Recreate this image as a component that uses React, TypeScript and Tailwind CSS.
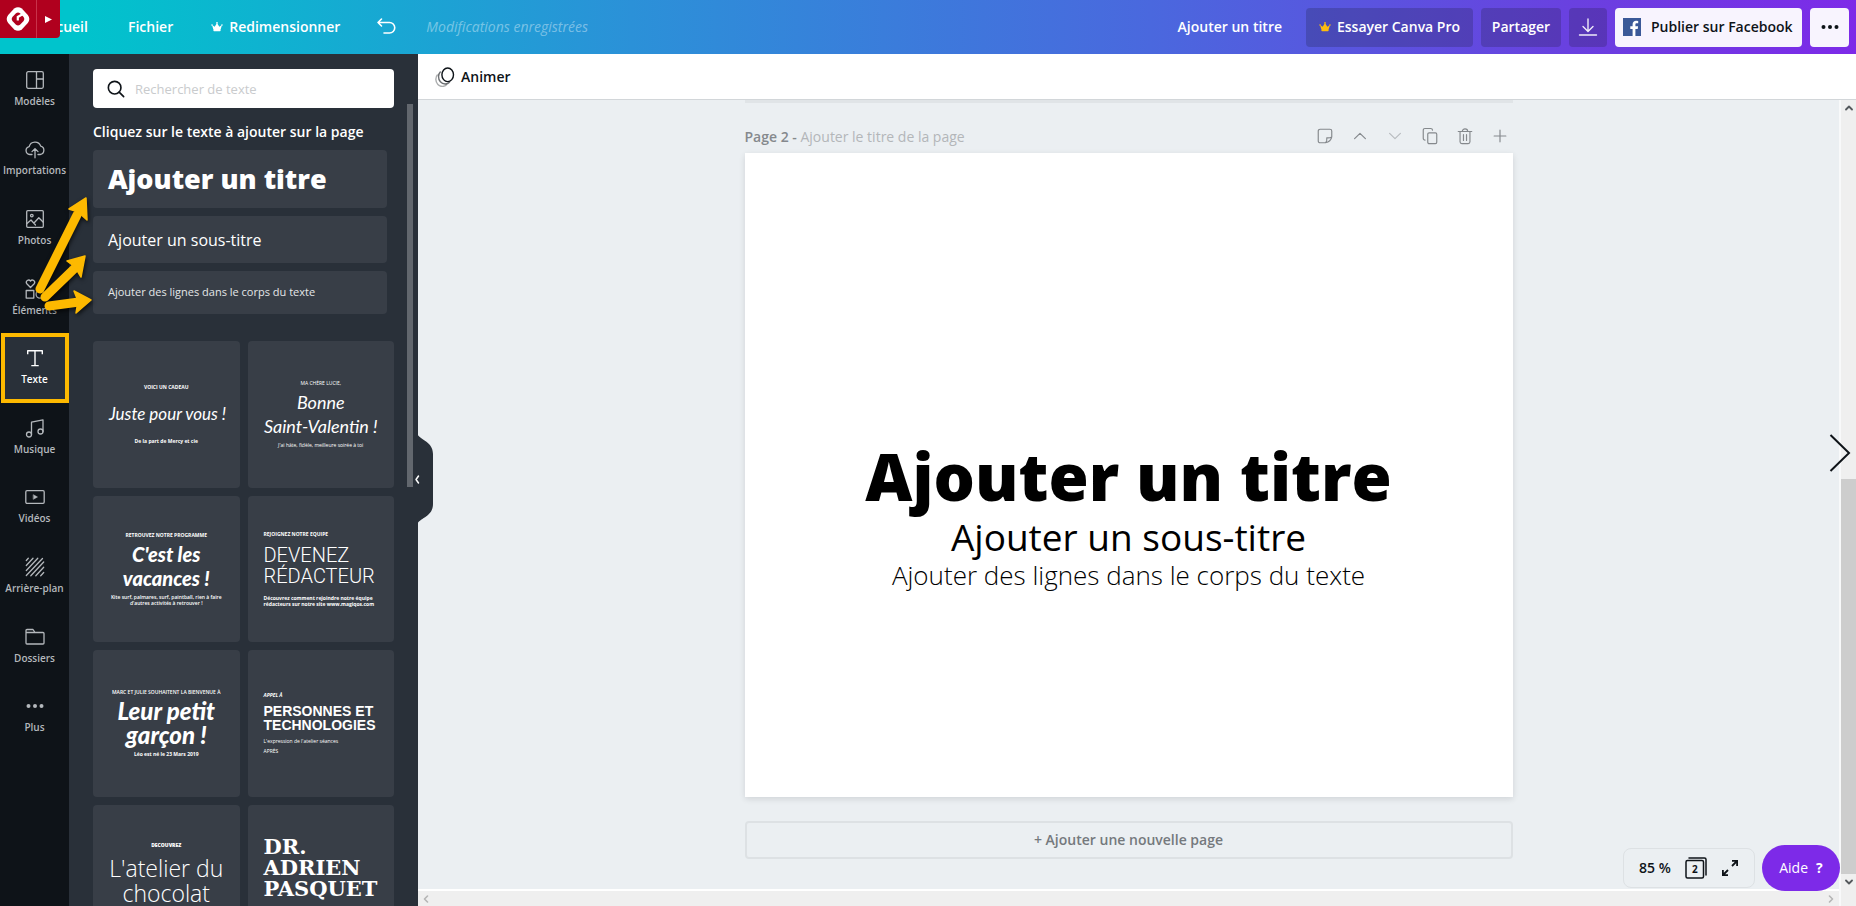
import React from "react";

type SvgProps = { className?: string };

const line = {
  fill: "none",
  stroke: "currentColor",
  strokeWidth: 1.3,
  strokeLinecap: "round" as const,
  strokeLinejoin: "round" as const,
};

/* ---------- Icons ---------- */

function Crown({ className }: SvgProps) {
  return (
    <svg viewBox="0 0 14 14" className={className} fill="currentColor" aria-hidden="true">
      <path d="M2.6 9.4 1.2 4.6 4.3 6.6 7 2.2l2.7 4.4 3.1-2-1.4 4.8z" />
      <rect x="2.8" y="9" width="8.4" height="3" rx=".8" />
      <circle cx="1.2" cy="4.6" r=".9" />
      <circle cx="12.8" cy="4.6" r=".9" />
      <circle cx="7" cy="2.1" r="1" />
    </svg>
  );
}

function BrandBadge() {
  return (
    <svg viewBox="0 0 26 26" className="size-[26px]" aria-hidden="true">
      <path
        d="M9.200 2.600Q13 0 16.800 2.600L22.800 9Q25.800 13 22.800 17L16.800 23.400Q13 26 9.200 23.400L3.200 17Q.200 13 3.200 9Z"
        fill="#fff"
      />
      <path
        d="M11 7.200Q13 5.600 15 7.200L18.600 11Q20.100 13 18.600 15L15 18.800Q13 20.400 11 18.800L7.400 15Q5.900 13 7.400 11Z"
        fill="#b0001e"
      />
      <path d="M17.500 8.200 12.800 11v3.600" fill="none" stroke="#fff" strokeWidth="2.200" />
    </svg>
  );
}

function TemplateIcon() {
  return (
    <svg viewBox="0 0 20 20" className="size-5" {...line} aria-hidden="true">
      <rect x="1.700" y="1.700" width="16.600" height="16.600" rx="1.500" />
      <path d="M11.500 1.700v16.600M11.500 9h6.800" />
    </svg>
  );
}
function UploadIcon() {
  return (
    <svg viewBox="0 0 20 20" className="size-5" {...line} aria-hidden="true">
      <path d="M7 15.500H4.800a4 4 0 0 1-.600-7.900 6 6 0 0 1 11.500-.500 4.300 4.300 0 0 1-.500 8.400H13" />
      <path d="M10 18.800V10M7 12.600l3-3 3 3" />
    </svg>
  );
}
function PhotoIcon() {
  return (
    <svg viewBox="0 0 20 20" className="size-5" {...line} aria-hidden="true">
      <rect x="1.700" y="1.700" width="16.600" height="16.600" rx="1" />
      <circle cx="6.800" cy="6.600" r="1.300" />
      <path d="m2 14.500 4-3.500 4.500 5M9 14l4.800-5.200 4.500 4.500" />
    </svg>
  );
}
function ElementsIcon() {
  return (
    <svg viewBox="0 0 20 20" className="size-5" {...line} aria-hidden="true">
      <path d="M5.500 8.500 1.800 4.700a2.200 2.200 0 0 1 3.700-2.600 2.200 2.200 0 0 1 3.700 2.600z" />
      <rect x="1.200" y="11.500" width="7.600" height="7.600" />
      <circle cx="15" cy="15.300" r="3.900" />
    </svg>
  );
}
function TextIcon() {
  return (
    <svg viewBox="0 0 20 20" className="size-5" {...line} strokeLinecap="square" strokeWidth="1.400" aria-hidden="true">
      <path d="M2.700 5.500V2.700h14.600v2.800M10 2.700v14.600M7 17.600h6" />
    </svg>
  );
}
function MusicIcon() {
  return (
    <svg viewBox="0 0 20 20" className="size-5" {...line} aria-hidden="true">
      <circle cx="4" cy="16.500" r="2.500" />
      <circle cx="15.500" cy="13.500" r="2.500" />
      <path d="M6.500 16.500V4.200L18 1.800v11.700" />
    </svg>
  );
}
function VideoIcon() {
  return (
    <svg viewBox="0 0 20 20" className="size-5" {...line} aria-hidden="true">
      <rect x=".800" y="3.700" width="18.400" height="12.600" rx="1.200" />
      <path d="m8.500 7.800 4 2.200-4 2.200z" fill="currentColor" strokeWidth=".500" />
    </svg>
  );
}
function BackgroundIcon() {
  return (
    <svg viewBox="0 0 20 20" className="size-5" {...line} aria-hidden="true">
      <path d="M1.300 3.500 3.300 1.300M1.300 8.500l6.700-7.200M1.300 13.500 12.800 1.300M1.300 18.500 17.500 1.500M5.800 18.700 18.700 5M10.800 18.700 18.700 10.300M15.700 18.700l3-3.200" />
    </svg>
  );
}
function FolderIcon() {
  return (
    <svg viewBox="0 0 20 20" className="size-5" {...line} aria-hidden="true">
      <path d="M1 15.500V3.500a1 1 0 0 1 1-1h6l2 3h8a1 1 0 0 1 1 1v9.500a1 1 0 0 1-1 1H2a1 1 0 0 1-1-1zM1 5.500h9" />
    </svg>
  );
}
function DotsIcon({ className = "size-5" }: SvgProps) {
  return (
    <svg viewBox="0 0 20 20" className={className} fill="currentColor" aria-hidden="true">
      <circle cx="3.500" cy="10" r="2" />
      <circle cx="10" cy="10" r="2" />
      <circle cx="16.500" cy="10" r="2" />
    </svg>
  );
}

/* ---------- Header ---------- */

const darkButton =
  "flex h-[39px] items-center justify-center rounded bg-[#0e1318]/20 text-white";

function Header() {
  return (
    <header className="flex h-[54px] shrink-0 items-center justify-between bg-[linear-gradient(90deg,#00c4cc_0%,#00c4cc_4%,#2b91d8_34%,#4a68de_62%,#6a40e0_85%,#7d2ae8_100%)] pr-[7px] pl-10 text-sm font-[570] text-white">
      <nav className="flex items-center" aria-label="Menu principal">
        <a href="#accueil" className="w-[88px]">Accueil</a>
        <a href="#fichier">Fichier</a>
        <a href="#redimensionner" className="ml-[38px] flex items-center gap-1.5">
          <Crown className="size-3" />
          Redimensionner
        </a>
        <button type="button" aria-label="Annuler" className="ml-9">
          <svg viewBox="0 0 20 20" className="size-5" {...line} strokeWidth="1.600" aria-hidden="true">
            <path d="M5.500 2 2 5.500 5.500 9M2 5.500h11.500a5 5 0 0 1 0 10.500H8" />
          </svg>
        </button>
        <span className="ml-[30px] font-normal text-white/40 italic">Modifications enregistrées</span>
      </nav>
      <div className="flex items-center gap-2">
        <a href="#titre" className="mr-4">Ajouter un titre</a>
        <button type="button" className={`${darkButton} w-[167px] gap-1.5`}>
          <Crown className="size-3 text-[#fdbc0d]" />
          Essayer Canva Pro
        </button>
        <button type="button" className={`${darkButton} w-20`}>Partager</button>
        <button type="button" aria-label="Télécharger" className={`${darkButton} w-[38px]`}>
          <svg viewBox="0 0 20 20" className="size-5 opacity-90" {...line} strokeWidth="1.400" aria-hidden="true">
            <path d="M10 2v12M5 9.500l5 5 5-5M1.500 18h17" />
          </svg>
        </button>
        <button
          type="button"
          className="flex h-[39px] w-[187px] items-center gap-2.5 rounded bg-[#f8f4fe] pl-2 text-[#0e1318]"
        >
          <svg viewBox="0 0 18 18" className="size-[18px]" aria-hidden="true">
            <rect width="18" height="18" fill="#3b5998" />
            <path
              d="M12.400 18v-7h2.300l.400-2.700h-2.700V6.600c0-.800.300-1.300 1.400-1.300h1.400V2.900a18 18 0 0 0-2.100-.100c-2 0-3.500 1.200-3.500 3.500v2H7.300V11h2.300v7z"
              fill="#fff"
            />
          </svg>
          Publier sur Facebook
        </button>
        <button
          type="button"
          aria-label="Plus d'options"
          className="flex h-[39px] w-[39px] items-center justify-center rounded bg-[#f8f4fe] text-[#0e1318]"
        >
          <DotsIcon className="size-5" />
        </button>
      </div>
    </header>
  );
}

/* ---------- Left navigation ---------- */

const navItems: { label: string; icon: React.ReactNode; active?: boolean }[] = [
  { label: "Modèles", icon: <TemplateIcon /> },
  { label: "Importations", icon: <UploadIcon /> },
  { label: "Photos", icon: <PhotoIcon /> },
  { label: "Éléments", icon: <ElementsIcon /> },
  { label: "Texte", icon: <TextIcon />, active: true },
  { label: "Musique", icon: <MusicIcon /> },
  { label: "Vidéos", icon: <VideoIcon /> },
  { label: "Arrière-plan", icon: <BackgroundIcon /> },
  { label: "Dossiers", icon: <FolderIcon /> },
  { label: "Plus", icon: <DotsIcon /> },
];

function SideNav() {
  return (
    <nav className="w-[69px] shrink-0 bg-[#0e1318] pt-px" aria-label="Outils">
      <ul className="grid h-[696px] grid-rows-10">
        {navItems.map((item) => (
          <li key={item.label} className={item.active ? "min-h-0 pl-px" : "min-h-0"}>
            <button
              type="button"
              className={
                item.active
                  ? "flex h-full w-full flex-col items-center justify-center gap-1 bg-[#293039] pr-px pb-0.5 text-white outline-4 -outline-offset-4 outline-[#fdb900]"
                  : "flex h-full w-full flex-col items-center justify-center gap-1 pb-0.5 text-[#b4b8bc]"
              }
            >
              {item.icon}
              <span className="text-[10px] leading-3.5 font-semibold whitespace-nowrap">{item.label}</span>
            </button>
          </li>
        ))}
      </ul>
    </nav>
  );
}

/* ---------- Text panel ---------- */

const card =
  "flex aspect-square flex-col justify-center overflow-hidden rounded bg-[#383e47] px-4 text-white";
const tiny = "text-[5px] leading-[6px] whitespace-nowrap";

function TextPanel() {
  return (
    <section className="relative w-[349px] shrink-0 bg-[#293039] pt-[15px] pr-6 pl-6 text-white" aria-label="Texte">
      <div className="flex h-[39px] items-center rounded bg-white pl-3.5 text-[#0e1318]">
        <svg viewBox="0 0 20 20" className="size-[18px]" {...line} strokeWidth="1.800" aria-hidden="true">
          <circle cx="8.500" cy="8.500" r="7" />
          <path d="m13.500 13.500 5 5" />
        </svg>
        <input
          type="search"
          aria-label="Rechercher de texte"
          placeholder="Rechercher de texte"
          className="ml-2.5 h-full min-w-0 flex-1 bg-transparent text-[13px] outline-none placeholder:text-[#c9cbcd]"
        />
      </div>
      <h2 className="pt-3.5 pb-2 text-sm leading-5 font-semibold whitespace-nowrap">
        Cliquez sur le texte à ajouter sur la page
      </h2>
      <div className="mr-[7px] flex flex-col gap-2 text-left">
        <button type="button" className="h-[58px] rounded bg-[#383e47] px-[15px] text-left text-[27px] font-extrabold">
          Ajouter un titre
        </button>
        <button type="button" className="h-[47px] rounded bg-[#383e47] px-[15px] text-left text-base">
          Ajouter un sous-titre
        </button>
        <button type="button" className="h-[43px] rounded bg-[#383e47] px-[15px] text-left text-[11px] text-[#e4e6e8]">
          Ajouter des lignes dans le corps du texte
        </button>
      </div>
      <div className="mt-[27px] grid grid-cols-2 gap-2">
        <button type="button" className={`${card} text-center`}>
          <span className={`${tiny} font-bold`}>VOICI UN CADEAU</span>
          <span className="my-2 font-['Lato'] text-[17px] leading-8 whitespace-nowrap italic">Juste pour vous !</span>
          <span className={`${tiny} font-bold`}>De la part de Mercy et cie</span>
        </button>
        <button type="button" className={`${card} text-center`}>
          <span className={tiny}>MA CHÈRE LUCIE,</span>
          <span className="my-1 font-['Lato'] text-lg leading-6 whitespace-nowrap italic">
            Bonne
            <br />
            Saint-Valentin !
          </span>
          <span className={tiny}>J'ai hâte, fidèle, meilleure soirée à toi</span>
        </button>
        <button type="button" className={`${card} text-center`}>
          <span className={`${tiny} font-bold`}>RETROUVEZ NOTRE PROGRAMME</span>
          <span className="my-1 font-['Lato'] text-xl leading-6 font-black whitespace-nowrap italic">
            C'est les
            <br />
            vacances !
          </span>
          <span className={`${tiny} self-center font-semibold`}>
            Kite surf, palmares, surf, paintball, rien à faire
            <br />
            d'autres activités à retrouver !
          </span>
        </button>
        <button type="button" className={`${card} text-left`}>
          <span className={`${tiny} font-bold`}>REJOIGNEZ NOTRE EQUIPE</span>
          <span className="my-2 font-['Roboto'] text-xl leading-[21px] font-light whitespace-nowrap">
            DEVENEZ
            <br />
            RÉDACTEUR
          </span>
          <span className={`${tiny} font-bold`}>
            Découvrez comment rejoindre notre équipe
            <br />
            rédacteurs sur notre site www.magiqos.com
          </span>
        </button>
        <button type="button" className={`${card} text-center`}>
          <span className={`${tiny} self-center font-semibold`}>MARC ET JULIE SOUHAITENT LA BIENVENUE À</span>
          <span className="my-1 self-center font-['Lato'] text-2xl leading-6 font-black whitespace-nowrap italic">
            Leur petit
            <br />
            garçon !
          </span>
          <span className={`${tiny} font-bold`}>Léo est né le 23 Mars 2019</span>
        </button>
        <button type="button" className={`${card} text-left`}>
          <span className={`${tiny} font-bold italic`}>APPEL À</span>
          <span className="my-1.5 font-['Liberation_Sans'] text-sm leading-3.5 font-bold whitespace-nowrap">
            PERSONNES ET
            <br />
            TECHNOLOGIES
          </span>
          <span className={tiny}>L'expression de l'atelier séances</span>
          <span className={`${tiny} mt-1`}>APRÈS</span>
        </button>
        <button type="button" className={`${card} text-center`}>
          <span className={`${tiny} font-extrabold`}>DECOUVREZ</span>
          <span className="my-2 self-center font-['Open_Sans'] text-[23px] leading-[25px] font-light whitespace-nowrap">
            L'atelier du
            <br />
            chocolat
          </span>
        </button>
        <button type="button" className={`${card} text-left`}>
          <span className="font-['DejaVu_Serif'] text-[21px] leading-[21px] font-bold whitespace-nowrap">
            DR.
            <br />
            ADRIEN
            <br />
            PASQUET
          </span>
          <span className="mt-2 text-[8px] leading-3">Médecin de la vue</span>
        </button>
      </div>

      {/* Panel scrollbar */}
      <div className="absolute top-[50px] right-[5px] h-[383px] w-1.5 bg-[#62676e]" />

      {/* Collapse handle */}
      <button type="button" aria-label="Masquer le panneau" className="absolute top-[378px] -right-[15px] z-10 h-24 w-5 text-white">
        <svg viewBox="0 0 20 96" className="h-24 w-5" aria-hidden="true">
          <path d="M4 0C4 8 20 8 20 22v50c0 14-16 14-16 22z" fill="#293039" />
          <path d="M5.500 44 3 47.500 5.500 51" {...line} strokeWidth="1.500" />
        </svg>
      </button>
    </section>
  );
}

/* ---------- Canvas ---------- */

const pageTools: { label: string; drawing: React.ReactNode; faded?: boolean }[] = [
  {
    label: "Ajouter une note",
    drawing: <path d="M10.500 17.500H4.500a2 2 0 0 1-2-2v-11a2 2 0 0 1 2-2h11a2 2 0 0 1 2 2v6.500q-1 5.500-7 6.500M10.500 17.500q2-2 1.500-5.500 3 .500 5.500-1" />,
  },
  { label: "Monter la page", drawing: <path d="m4 13 6-6 6 6" /> },
  { label: "Descendre la page", drawing: <path d="m4 7 6 6 6-6" />, faded: true },
  {
    label: "Dupliquer la page",
    drawing: (
      <>
        <rect x="7.500" y="6.500" width="10" height="12" rx="1.500" />
        <path d="M4.500 14.500a2 2 0 0 1-2-2V3.500a1.800 1.800 0 0 1 1.800-1.800h6.500a2 2 0 0 1 2 1.800" />
      </>
    ),
  },
  {
    label: "Supprimer la page",
    drawing: <path d="M2.500 5h15M4.500 5v11.500a2 2 0 0 0 2 2h7a2 2 0 0 0 2-2V5M7 5a3 3 0 0 1 6 0M8.300 8.500v6.500M11.700 8.500v6.500" />,
  },
  { label: "Ajouter une page", drawing: <path d="M10 3.500v13M3.500 10h13" /> },
];

function Canvas() {
  return (
    <main className="relative flex min-w-0 flex-1 flex-col bg-[#ebeff2]">
      <div className="flex h-[46px] shrink-0 items-center border-b border-[#d2d6d9] bg-white pl-[17px]">
        <button type="button" className="flex items-center gap-1.5 text-sm font-[570] text-[#0e1318]">
          <svg viewBox="0 0 20 20" className="size-5" fill="none" stroke="currentColor" strokeWidth="1.400" aria-hidden="true">
            <ellipse cx="12.700" cy="7.800" rx="5.800" ry="6.800" />
            <path d="M5.600 4.400a6.200 6.800 0 1 0 9.200 10.600" opacity=".6" />
            <path d="M2.600 7.500a6.200 6.800 0 1 0 9.400 9.700" opacity=".35" />
          </svg>
          Animer
        </button>
      </div>

      <div className="flex min-h-0 flex-1">
        <div className="flex min-w-0 flex-1 flex-col">
          <div className="min-h-0 flex-1 overflow-hidden px-6">
            <div className="mx-auto max-w-[768px]">
              <div className="h-[3px] bg-[#e0e4e7]" />
              <div className="flex h-[50px] items-end justify-between pb-1.5">
                <p className="text-sm leading-5 text-[#b3b6b9]">
                  <span className="font-[570] text-[#85898d]">Page 2 - </span>
                  Ajouter le titre de la page
                </p>
                <div className="mr-1 flex gap-[17px] pb-0.5 text-[#85898d]">
                  {pageTools.map((tool) => (
                    <button key={tool.label} type="button" aria-label={tool.label} className={tool.faded ? "opacity-50" : ""}>
                      <svg viewBox="0 0 20 20" className="size-[18px]" {...line} aria-hidden="true">
                        {tool.drawing}
                      </svg>
                    </button>
                  ))}
                </div>
              </div>
              <article className="flex aspect-[940/788] flex-col items-center bg-white pt-[282px] text-center whitespace-nowrap text-black shadow-[0_2px_6px_rgba(14,19,24,0.12)]">
                <h1 className="text-[65px] leading-[82px] font-extrabold">Ajouter un titre</h1>
                <p className="text-[37px] leading-10">Ajouter un sous-titre</p>
                <p className="text-[26px] leading-9 font-light">Ajouter des lignes dans le corps du texte</p>
              </article>
              <button
                type="button"
                className="mt-6 h-[38px] w-full rounded-sm border-2 border-[#dde1e4] text-sm font-[570] text-[#75797d]"
              >
                + Ajouter une nouvelle page
              </button>
            </div>
          </div>
          <div className="flex h-[17px] shrink-0 items-center justify-between border-t-2 border-white bg-[#efefef] px-1 text-[#b5b5b5]">
            <svg viewBox="0 0 8 8" className="size-2" {...line} strokeWidth="1.600" aria-hidden="true">
              <path d="M5.500 1 2.500 4l3 3" />
            </svg>
            <svg viewBox="0 0 8 8" className="size-2" {...line} strokeWidth="1.600" aria-hidden="true">
              <path d="m2.500 1 3 3-3 3" />
            </svg>
          </div>
        </div>
        <div className="flex w-[17px] shrink-0 flex-col items-center justify-between border-l-2 border-[#f8f9fa] bg-[#efefef] pt-1 pb-5 text-[#55595d]">
          <svg viewBox="0 0 8 8" className="size-2" {...line} strokeWidth="1.800" aria-hidden="true">
            <path d="m1 5.500 3-3 3 3" />
          </svg>
          <div className="flex h-[407px] w-full flex-col items-center justify-between">
            <div className="h-[395px] w-full bg-[#cdcdcd]" />
            <svg viewBox="0 0 8 8" className="size-2" {...line} strokeWidth="1.800" aria-hidden="true">
              <path d="m1 2.500 3 3 3-3" />
            </svg>
          </div>
        </div>
      </div>

      {/* Floating page controls */}
      <button type="button" aria-label="Suivant" className="absolute top-[380px] right-[5px] text-[#0e1318]">
        <svg viewBox="0 0 22 38" className="h-[38px] w-[22px]" fill="none" stroke="currentColor" strokeWidth="2" aria-hidden="true">
          <path d="m1.500 1 18.500 18-18.500 18" />
        </svg>
      </button>
      <div className="absolute right-4 bottom-[15px] flex items-center gap-[7px]">
        <div className="flex h-10 w-[132px] items-center rounded-lg border border-[#dde1e4] bg-[#ebeff2] pl-[15px] text-[#0e1318]">
          <span className="w-[46px] text-sm font-[570] whitespace-nowrap">85 %</span>
          <button type="button" aria-label="Gérer les pages" className="relative size-[22px]">
            <svg viewBox="0 0 22 22" className="size-[22px]" {...line} strokeWidth="1.500" aria-hidden="true">
              <rect x="1" y="3.500" width="17.500" height="17.500" rx="1.500" />
              <path d="M4 1h15.500A1.500 1.500 0 0 1 21 2.500V18" />
            </svg>
            <span className="absolute bottom-0.5 left-[7px] text-[10px] leading-4 font-bold">2</span>
          </button>
          <button type="button" aria-label="Plein écran" className="ml-3.5">
            <svg viewBox="0 0 18 18" className="size-[18px]" {...line} strokeWidth="1.800" strokeLinecap="butt" strokeLinejoin="miter" aria-hidden="true">
              <path d="M11 7 16 2M11 1.900h5.100V7M7 11 2 16M1.900 11v5.100H7" />
            </svg>
          </button>
        </div>
        <button
          type="button"
          className="flex h-[46px] w-[78px] items-center justify-center gap-2 rounded-full bg-[#7d2ae8] text-sm text-white"
        >
          Aide <span className="font-bold">?</span>
        </button>
      </div>
    </main>
  );
}

/* ---------- Annotations ---------- */

function Arrows() {
  return (
    <svg
      viewBox="0 0 100 140"
      className="pointer-events-none absolute top-[185px] left-0 z-20 h-[140px] w-[100px] drop-shadow-[1px_2px_2px_rgba(0,0,0,0.7)]"
      fill="#fdb900"
      aria-hidden="true"
    >
      <g stroke="#fdb900" strokeWidth="9" strokeLinecap="round">
        <path d="M40 104 77 30" />
        <path d="M45 112 75 83" />
        <path d="M49 121 79 117" />
      </g>
      <g stroke="#fdb900" strokeWidth="1.500" strokeLinejoin="round">
        <path d="M86 13 69 24l9 3 9 8z" />
        <path d="M85 71 67 76l8 6 6 10z" />
        <path d="M91 115 74 106l4 10-2 12z" />
      </g>
    </svg>
  );
}

export default function App() {
  return (
    <div className="relative flex h-screen flex-col overflow-hidden font-['Open_Sans',sans-serif]">
      <Header />
      <div className="flex min-h-0 flex-1">
        <SideNav />
        <TextPanel />
        <Canvas />
      </div>
      <div className="absolute top-0 left-0 flex h-[38px] w-[60px] items-center rounded-br bg-[#b0001e] pl-[5px]">
        <BrandBadge />
        <button type="button" aria-label="Ouvrir" className="ml-[5px] flex h-full flex-1 items-center justify-center border-l border-[#c8324a] text-white">
          <svg viewBox="0 0 8 8" className="size-[7px]" fill="currentColor" aria-hidden="true">
            <path d="M0 0v8l8-4z" />
          </svg>
        </button>
      </div>
      <Arrows />
    </div>
  );
}
